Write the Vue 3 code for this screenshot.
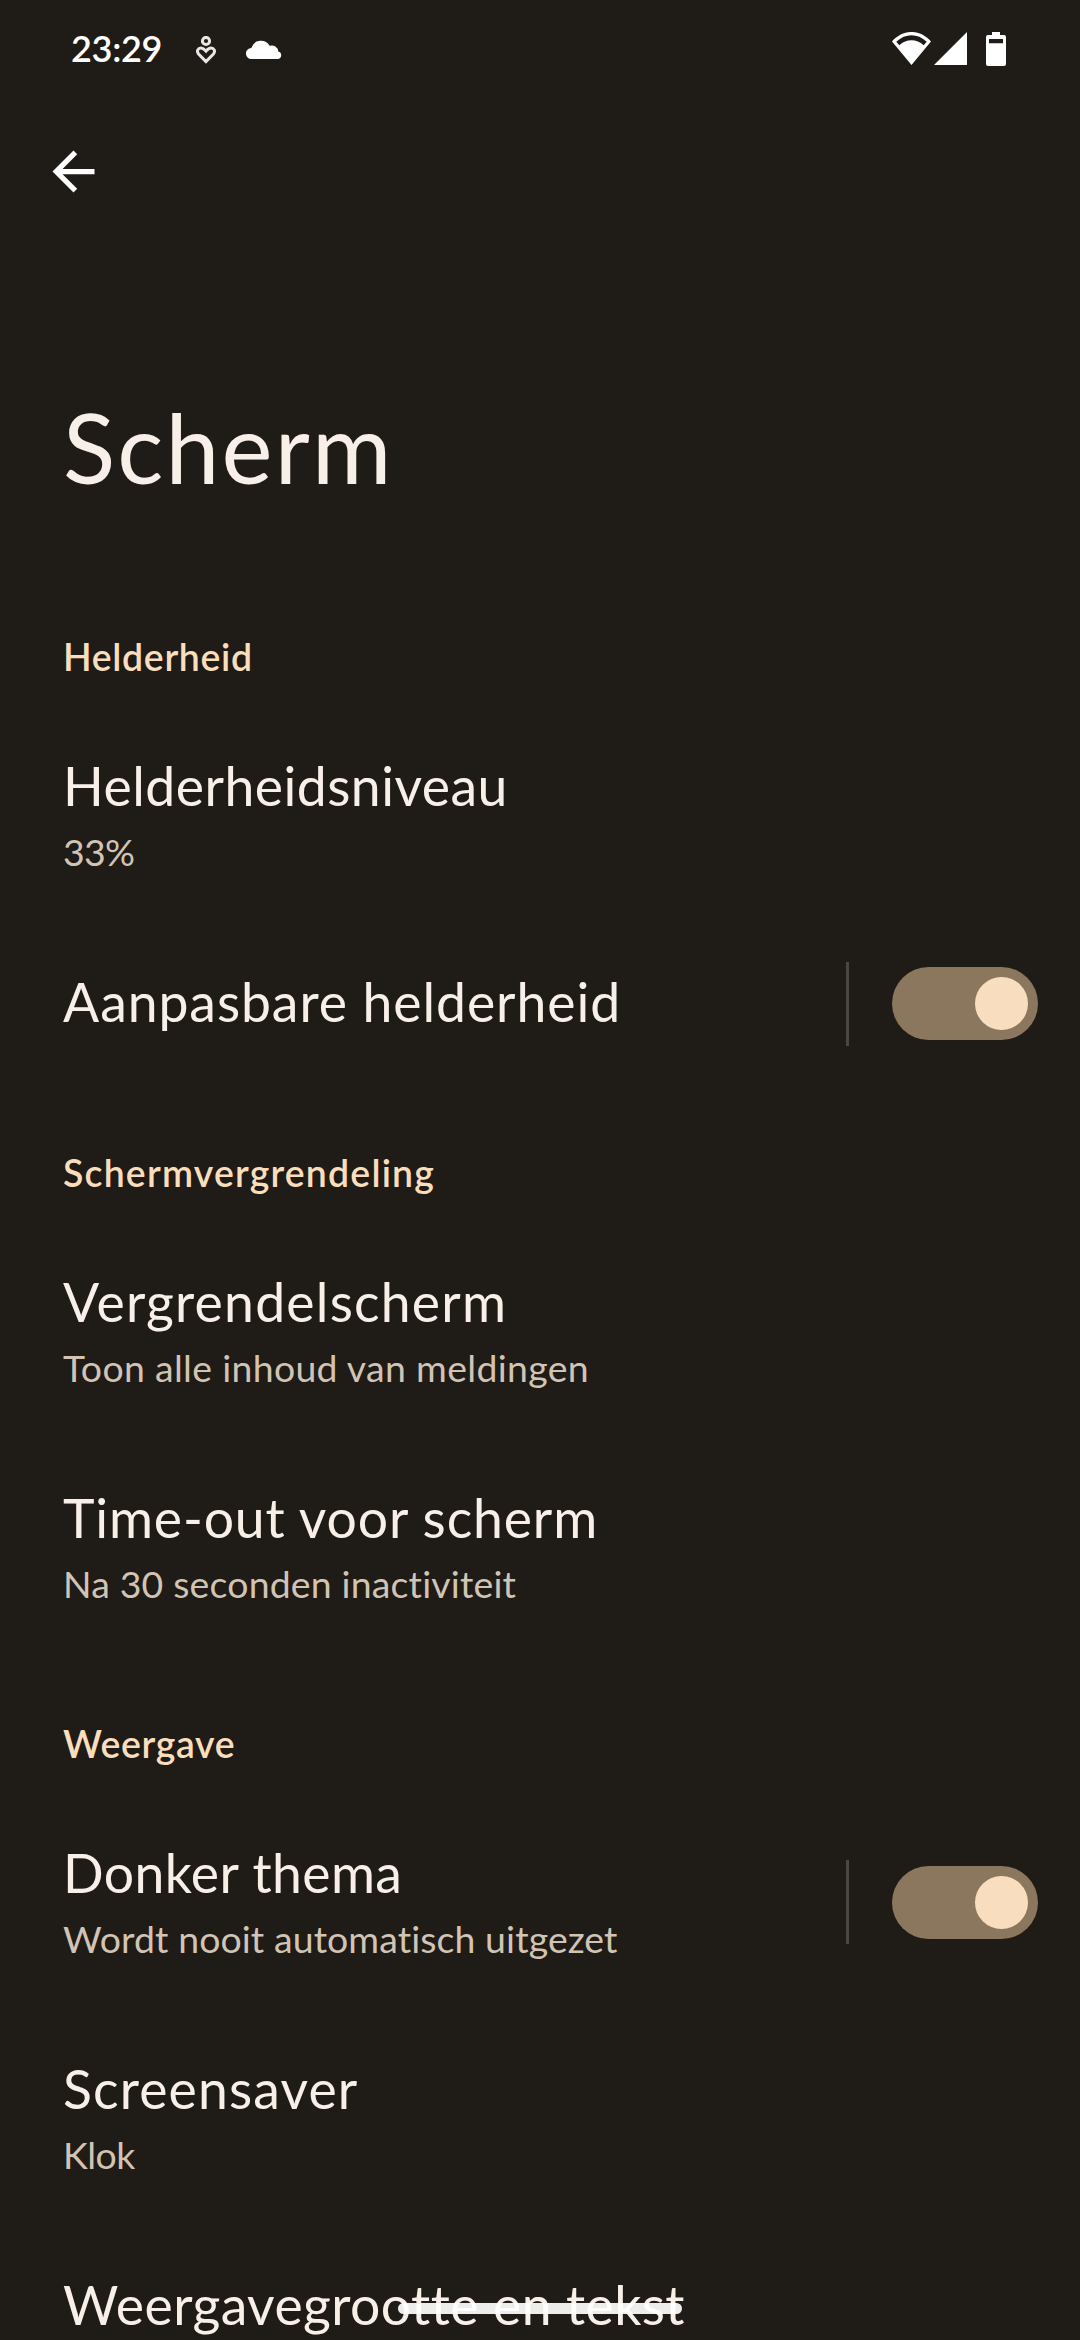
<template>
  <div class="screen">
    <header class="status-bar">
      <span class="clock">23:29</span>
      <svg class="icon-wellbeing" viewBox="0 0 20 28" width="20" height="28">
        <circle cx="10" cy="5" r="3.6" />
        <path d="M10 25.6 2.800 18.300C0 14.900 2.200 12 5 12c2 0 3.200.9 5 3.100 1.800-2.200 3-3.100 5-3.100 2.800 0 5 2.900 2.200 6.300Z" />
      </svg>
      <svg class="icon-cloud" viewBox="0 0 36 20" width="36" height="20">
        <path d="M5.500 20A5.500 5.500 0 0 1 5.300 9A10 10 0 0 1 23.600 6.800A6.500 6.500 0 0 1 32.300 12.600A3.800 3.800 0 0 1 32.200 20Z" />
      </svg>
      <div class="system-icons">
        <svg viewBox="0 0 39 33" width="39" height="33">
          <path fill-rule="evenodd" d="M0 9.500C11-3.200 28-3.200 39 9.500L19.500 33ZM4.300 9.800 7.300 13.200C14.500 6.600 24.500 6.600 31.700 13.200L34.700 9.800C25.500 1.200 13.500 1.200 4.300 9.800Z" />
        </svg>
        <svg class="icon-signal" viewBox="0 0 33 33" width="33" height="33">
          <path d="M33 0V33H0Z" />
        </svg>
        <svg class="icon-battery" viewBox="0 0 20 34" width="20" height="34">
          <path fill-rule="evenodd" d="M6 0h8v3h4a2 2 0 0 1 2 2v27a2 2 0 0 1-2 2H2a2 2 0 0 1-2-2V5a2 2 0 0 1 2-2h4ZM3 7v4.300h14V7Z" />
        </svg>
      </div>
    </header>

    <button class="back-button" aria-label="Terug">
      <svg viewBox="0 0 24 24" width="63" height="63">
        <path d="M20 11H7.830l5.590-5.590L12 4l-8 8 8 8 1.410-1.410L7.830 13H20v-2z" />
      </svg>
    </button>

    <h1 class="page-title">Scherm</h1>

    <section v-for="section in sections" :key="section.title">
      <h2 class="section-title" :style="{ letterSpacing: section.spacing + 'px' }">{{ section.title }}</h2>
      <div v-for="item in section.items" :key="item.title" class="row" :class="{ 'two-line': item.summary }">
        <div class="row-text">
          <div class="row-title" :style="{ letterSpacing: item.spacing + 'px' }">{{ item.title }}</div>
          <div v-if="item.summary" class="row-summary" :style="{ letterSpacing: item.summarySpacing + 'px' }">
            {{ item.summary }}
          </div>
        </div>
        <div v-if="item.toggle" class="row-toggle">
          <button
            class="switch"
            :class="{ on: item.on }"
            role="switch"
            :aria-checked="item.on"
            @click="item.on = !item.on"
          >
            <span class="thumb"></span>
          </button>
        </div>
      </div>
    </section>

    <div class="home-handle"></div>
  </div>
</template>

<script setup>
import { reactive } from 'vue'

const sections = reactive([
  {
    title: 'Helderheid',
    spacing: 0.68,
    items: [
      { title: 'Helderheidsniveau', spacing: 0.47, summary: '33%', summarySpacing: -0.69 },
      { title: 'Aanpasbare helderheid', spacing: 0.93, toggle: true, on: true }
    ]
  },
  {
    title: 'Schermvergrendeling',
    spacing: 1.2,
    items: [
      { title: 'Vergrendelscherm', spacing: 1.22, summary: 'Toon alle inhoud van meldingen', summarySpacing: 0.33 },
      { title: 'Time-out voor scherm', spacing: 0.85, summary: 'Na 30 seconden inactiviteit', summarySpacing: 0.19 }
    ]
  },
  {
    title: 'Weergave',
    spacing: 0.68,
    items: [
      {
        title: 'Donker thema',
        spacing: 0.42,
        summary: 'Wordt nooit automatisch uitgezet',
        summarySpacing: 0.1,
        toggle: true,
        on: true
      },
      { title: 'Screensaver', spacing: 1.14, summary: 'Klok', summarySpacing: -0.5 },
      { title: 'Weergavegrootte en tekst', spacing: 0.42 }
    ]
  }
])
</script>

<style>
body {
  background: #1f1b16;
}
</style>

<style scoped>
.screen {
  position: relative;
  width: 1080px;
  height: 2340px;
  overflow: hidden;
  background: #1f1b16;
  color: #f8efe9;
  font-family: Lato, 'Open Sans', sans-serif;
  font-variant-ligatures: none;
}

.status-bar {
  display: flex;
  align-items: flex-start;
  height: 140px;
  padding: 0 74px 0 71px;
  box-sizing: border-box;
  color: #fff;
}

.status-bar svg {
  flex: none;
  fill: #fff;
}

.clock {
  width: 125px;
  padding-top: 23px;
  font-size: 36px;
  line-height: 50px;
  font-weight: 600;
  letter-spacing: -0.3px;
}

.status-bar .icon-wellbeing {
  margin-top: 36px;
  fill: none;
  stroke: #e8e6e4;
  stroke-width: 3;
}

.icon-cloud {
  margin: 39px 0 0 30px;
}

.system-icons {
  display: flex;
  align-items: flex-start;
  margin: 32px 0 0 auto;
}

.icon-signal {
  margin-left: 3px;
}

.icon-battery {
  margin-left: 19px;
}

.back-button {
  display: block;
  width: 63px;
  height: 63px;
  margin-left: 42px;
  padding: 0;
  border: 0;
  background: none;
  cursor: pointer;
}

.back-button svg {
  display: block;
  fill: #fff;
}

.page-title {
  height: 181px;
  margin: 0;
  padding: 184px 0 0 63px;
  font-size: 96.5px;
  line-height: 120px;
  font-weight: 400;
  letter-spacing: 2.19px;
}

.section-title {
  height: 76px;
  margin: 0;
  padding: 64px 0 0 63px;
  color: #fadebc;
  font-size: 37.4px;
  line-height: 50px;
  font-weight: 600;
}

.row {
  display: flex;
  justify-content: space-between;
  align-items: center;
  height: 160.3px;
  padding: 0 42px 0 63px;
  white-space: nowrap;
}

.row.two-line {
  height: 215.7px;
}

.row-text {
  align-self: flex-start;
  padding-top: 45px;
}

.row-title {
  font-size: 53.5px;
  line-height: 64px;
}

.row-summary {
  margin-top: 10px;
  color: #d2c4b4;
  font-size: 37.4px;
  line-height: 50px;
}

.row-toggle {
  display: flex;
  align-items: center;
  height: 84px;
  padding-left: 43px;
  border-left: 3px solid #4a4742;
}

.two-line .row-toggle {
  margin-bottom: 2px;
}

.switch {
  display: flex;
  align-items: center;
  width: 146px;
  height: 73px;
  padding: 0 10px;
  border: 0;
  border-radius: 37px;
  background: #4a4742;
  cursor: pointer;
}

.switch.on {
  justify-content: flex-end;
  background: #8b775d;
}

.thumb {
  width: 53px;
  height: 53px;
  border-radius: 50%;
  background: #f8debe;
}

/* gesture bar, floats over the list */
.home-handle {
  position: absolute;
  left: 398px;
  top: 2303px;
  width: 284px;
  height: 11px;
  border-radius: 6px;
  background: rgba(255, 255, 255, 0.92);
}
</style>
